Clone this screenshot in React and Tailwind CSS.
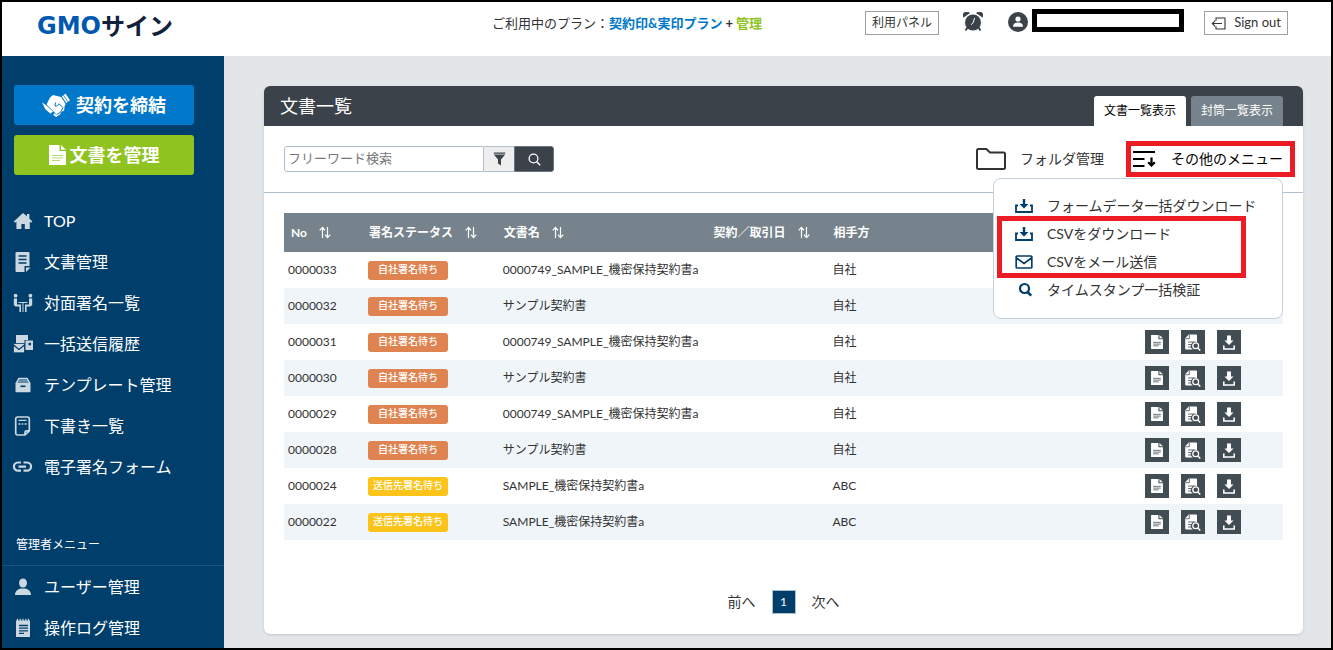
// Document list page — sidebar, toolbar with open "other" menu, documents table
import React, { useState } from 'react';

const DOCUMENTS = [
  { no: '0000033', status: 'own', name: '0000749_SAMPLE_機密保持契約書a', partner: '自社' },
  { no: '0000032', status: 'own', name: 'サンプル契約書', partner: '自社' },
  { no: '0000031', status: 'own', name: '0000749_SAMPLE_機密保持契約書a', partner: '自社' },
  { no: '0000030', status: 'own', name: 'サンプル契約書', partner: '自社' },
  { no: '0000029', status: 'own', name: '0000749_SAMPLE_機密保持契約書a', partner: '自社' },
  { no: '0000028', status: 'own', name: 'サンプル契約書', partner: '自社' },
  { no: '0000024', status: 'sent', name: 'SAMPLE_機密保持契約書a', partner: 'ABC' },
  { no: '0000022', status: 'sent', name: 'SAMPLE_機密保持契約書a', partner: 'ABC' },
];

const STATUS = {
  own: { label: '自社署名待ち', color: 'bg-[#df8350]' },
  sent: { label: '送信先署名待ち', color: 'bg-[#fcc419]' },
};

/* ---------- icons ---------- */

function Icon({ w = 20, h = 20, children, ...rest }) {
  return (
    <svg width={w} height={h} viewBox={`0 0 ${w} ${h}`} fill="currentColor" aria-hidden="true" className="shrink-0" {...rest}>
      {children}
    </svg>
  );
}

const HomeIcon = () => (
  <Icon>
    <path d="M10 2 0.8 10.4l1.2 1.4 1.4-1.1V18h5v-5h3.4v5h5v-7.3l1.4 1.1 1.2-1.4-3-2.8V3h-2.4v2.2z" />
  </Icon>
);

const DocIcon = () => (
  <Icon>
    <path d="M3.500 0h12a1 1 0 0 1 1 1v13h-5v6h-8a1 1 0 0 1-1-1V1a1 1 0 0 1 1-1zM13 15.500h4.500L13 20z" />
    <path d="M5.500 4h8M5.500 7.500h8M5.500 11h8" stroke="#003e6b" strokeWidth="1.300" />
  </Icon>
);

const MeetingIcon = () => (
  <Icon>
    <circle cx="2.600" cy="2.700" r="1.900" />
    <circle cx="17.400" cy="2.700" r="1.900" />
    <path d="M.8 5.500h3.200v6h4V19H6.400v-5.600H2.500L.8 12zM19.200 5.500H16v6h-4V19h1.600v-5.600h3.900l1.700-1.400zM5.500 9h9v1h-9z" />
    <path d="M9.500 9.500h1V19h-1z" />
  </Icon>
);

const MailHistoryIcon = () => (
  <Icon>
    <path d="M3 1h12v5h-3.500v3L6 12 3 9zM12.500 6.500H20v9.500h-7.500z" />
    <path d="M15.500 8.800h2.500v2.500h-2.500z" fill="#003e6b" />
    <path d="M.5 9.500h11V18a.8.800 0 0 1-.8.800H1.300a.8.800 0 0 1-.8-.8z" stroke="#003e6b" strokeWidth=".8" />
    <path d="M.5 11 6 15.500l5.500-4.500" fill="none" stroke="#003e6b" strokeWidth="1.300" />
  </Icon>
);

const BoxIcon = () => (
  <Icon>
    <path d="M6 3.500h8l3.500 5h-15z" opacity=".5" />
    <path d="M5.500 2.800h9L17.500 8v8.500a.8.800 0 0 1-.8.800H3.300a.8.800 0 0 1-.8-.8V8z" />
    <path d="M6.300 4.100h7.400L15.800 8H4.200z" fill="#003e6b" opacity=".5" />
    <path d="M7.500 10.500h5v1.600h-5z" fill="#003e6b" />
  </Icon>
);

const DraftIcon = () => (
  <Icon>
    <path d="M4.500 1h10a1.800 1.800 0 0 1 1.800 1.800v12L12 19H4.500a1.800 1.800 0 0 1-1.800-1.800V2.800A1.800 1.800 0 0 1 4.500 1zM16 14.800h-2.500a1.500 1.500 0 0 0-1.500 1.500V19" fill="none" stroke="currentColor" strokeWidth="1.700" />
    <path d="M5.500 4.300h8M5.500 8h2M8.700 8h1.600M11.600 8h2" stroke="currentColor" strokeWidth="1.300" />
  </Icon>
);

const LinkIcon = () => (
  <Icon>
    <path d="M8 5.500H5a4 4 0 0 0 0 8.200H8M10.500 5.500H14a4 4 0 0 1 0 8.200h-3.500M5.500 9.600H13" fill="none" stroke="currentColor" strokeWidth="2.200" />
  </Icon>
);

const UserIcon = () => (
  <Icon>
    <ellipse cx="10" cy="6" rx="4" ry="4.600" />
    <path d="M2 18c0-4 2.500-5.800 6-6.600h4c3.500.8 6 2.600 6 6.600z" />
  </Icon>
);

const LogIcon = () => (
  <Icon>
    <path d="M3 2.500h14V19H3z" />
    <path d="M4.500.8v3M7.200.8v3M10 .8v3M12.800.8v3M15.500.8v3" stroke="currentColor" strokeWidth="1.200" />
    <path d="M6 7.500h9M6 10.200h9M6 12.900h9M6 15.400h5" stroke="#003e6b" strokeWidth="1.300" />
  </Icon>
);

const HandshakeIcon = () => (
  <Icon w={28} h={25}>
    <path d="m19.800 3.300 3.800-2.500L28 7.300l-3.700 2.600z" />
    <path d="m21.400 2.300 4.400 6.500" stroke="#0077c8" strokeWidth=".8" />
    <path d="m0 9.300 5.500 4.200 5.500 5-2.500 2.300-5.300-4.800z" />
    <path d="M4.500 11.500 8 4.500l3-2.500 8 2 4.700 7-1.200 2.500-.3 4-3 1.500-1 2.200-4 2.800-3-2 1.500-2.500z" />
    <path d="M13.500 9.500 13 13c2 .5 3.500-.7 4-2.300l4 4-2.500 4.500-3.800 2.300" fill="none" stroke="#0077c8" strokeWidth="1" />
    <path d="m12 19.500 2 2" stroke="#0077c8" strokeWidth=".9" />
  </Icon>
);

const FileIcon = ({ w = 17, h = 20, line = '#b9dc74' }) => (
  <svg width={w} height={h} viewBox="0 0 17 20" fill="currentColor" aria-hidden="true">
    <path d="M0 0h10.500v6H17v14H0zM12 0l5 4.700h-5z" />
    <path d="M3 10.500h11M3 13h11M3 15.500h8" stroke={line} strokeWidth="1.100" />
  </svg>
);

const SearchDocIcon = () => (
  <Icon w={16} h={17}>
    <path d="M3.800.5h7.400a.8.800 0 0 1 .8.800v7A4 4 0 0 0 8 15.500H1a.8.800 0 0 1-.8-.8V4.300z" />
    <path d="M.5 4.700h3.800V.8M3 8h6M3 10.500h4M3 13h3.500" fill="none" stroke="#424c53" strokeWidth=".8" />
    <circle cx="10.700" cy="11.800" r="2.900" fill="#424c53" stroke="currentColor" strokeWidth="1.300" />
    <path d="m12.800 14 2.500 2.500" stroke="currentColor" strokeWidth="1.500" />
  </Icon>
);

const DownloadIcon = () => (
  <Icon w={12} h={15}>
    <path d="M4 .5h4V5.500h2.500L6 10 1.500 5.500H4z" />
    <path d="M.8 10.500v3.500h10.400v-3.500" fill="none" stroke="currentColor" strokeWidth="1.600" />
  </Icon>
);

const TrayIcon = () => (
  <Icon w={18} h={16}>
    <path d="M7.800 1h2.400v5h3.300L9 10.500 4.500 6h3.300z" />
    <path d="M3 7.500H1V14h16V7.500h-2" fill="none" stroke="currentColor" strokeWidth="1.800" />
  </Icon>
);

const MailIcon = () => (
  <Icon w={18} h={16}>
    <path d="M2 2h14a.8.800 0 0 1 .8.800v10.400a.8.800 0 0 1-.8.800H2a.8.800 0 0 1-.8-.8V2.800A.8.800 0 0 1 2 2zM1.500 4 9 9.500 16.500 4" fill="none" stroke="currentColor" strokeWidth="1.700" />
  </Icon>
);

const VerifyIcon = () => (
  <Icon w={18} h={16}>
    <circle cx="9.500" cy="6.500" r="4.500" fill="none" stroke="currentColor" strokeWidth="2.200" />
    <path d="m12.500 10 3.700 3.700" stroke="currentColor" strokeWidth="2.600" />
  </Icon>
);

const SortIcon = () => (
  <Icon w={12} h={13}>
    <path d="M3.500 12V1.500M.7 4.300l2.800-3 2.500 3M8.500 1v10.500M6 8.700l2.500 3 2.800-3" fill="none" stroke="currentColor" strokeWidth="1.200" />
  </Icon>
);

const ClockIcon = () => (
  <Icon>
    <circle cx="10" cy="10.500" r="8" />
    <path d="M.5 5.500A3.600 3.600 0 0 1 6.800 1.200zM19.500 5.500a3.600 3.600 0 0 0-6.300-4.300z" />
    <path d="m4.500 15.500-2 3M15.500 15.500l2 3" stroke="currentColor" strokeWidth="2" />
    <path d="M11.500 6 10.200 10.700 8 12.700" fill="none" stroke="#fff" strokeWidth="1" />
  </Icon>
);

const AccountIcon = () => (
  <Icon>
    <circle cx="10" cy="10" r="10" />
    <circle cx="10" cy="7" r="2.600" fill="#fff" />
    <path d="M5 14.800c0-3 2-4.200 5-4.200s5 1.200 5 4.200z" fill="#fff" />
  </Icon>
);

const SignOutIcon = () => (
  <Icon w={15} h={13}>
    <path d="M5 3.800V1h9v11H5V9.200M11 6.500H1.500M4.200 3.700 1.300 6.500l2.900 2.800" fill="none" stroke="currentColor" strokeWidth="1.100" />
  </Icon>
);

const FolderIcon = () => (
  <Icon w={30} h={22}>
    <path d="M2.500 1h7.800l3.700 3.500h13.500a1.500 1.500 0 0 1 1.500 1.500v13.500a1.500 1.500 0 0 1-1.500 1.500h-25A1.500 1.500 0 0 1 1 19.500v-17A1.500 1.500 0 0 1 2.500 1z" fill="none" stroke="currentColor" strokeWidth="2" />
  </Icon>
);

const ListDownIcon = () => (
  <Icon w={24} h={16}>
    <path d="M0 1h22M0 8h11.500M0 15h11.500" stroke="currentColor" strokeWidth="2" />
    <path d="M18.500 6.500v8M15.200 11.200l3.300 3.300 3.300-3.300" fill="none" stroke="currentColor" strokeWidth="2.200" />
  </Icon>
);

const FilterIcon = () => (
  <Icon w={13} h={14}>
    <path d="M.8.500h11.400v1.200H.8zM.8 2.500h11.400L8 7.500V13.500L5 11.500v-4z" />
  </Icon>
);

const LensIcon = () => (
  <Icon w={13} h={13}>
    <circle cx="5.500" cy="5.500" r="4.400" fill="none" stroke="currentColor" strokeWidth="1.300" />
    <path d="m8.700 8.700 3.500 3.500" stroke="currentColor" strokeWidth="1.400" />
  </Icon>
);

/* ---------- page parts ---------- */

const NAV = [
  { label: 'TOP', icon: HomeIcon },
  { label: '文書管理', icon: DocIcon },
  { label: '対面署名一覧', icon: MeetingIcon },
  { label: '一括送信履歴', icon: MailHistoryIcon },
  { label: 'テンプレート管理', icon: BoxIcon },
  { label: '下書き一覧', icon: DraftIcon },
  { label: '電子署名フォーム', icon: LinkIcon },
];

const ADMIN_NAV = [
  { label: 'ユーザー管理', icon: UserIcon },
  { label: '操作ログ管理', icon: LogIcon },
];

function NavList({ items }) {
  return (
    <ul>
      {items.map(({ label, icon: NavIcon }) => (
        <li key={label}>
          <a href="#" className="flex h-[41px] items-center gap-[11px] pl-[11px] text-base text-white">
            <span className="text-[#ccd8e1]"><NavIcon /></span>
            {label}
          </a>
        </li>
      ))}
    </ul>
  );
}

function Header() {
  return (
    <header className="flex h-[54px] items-start justify-between bg-white pr-[43px] pl-[35px]">
      <a href="#" className="flex h-12 items-center text-2xl font-bold">
        <span className="font-['DejaVu_Sans'] text-[#0058b0]">GMO</span>
        <span className="text-[#14213a]">サイン</span>
      </a>

      <div className="flex items-start">
        <p className="mr-[103px] flex h-11 items-center text-[13px] text-[#333]">
          ご利用中のプラン：
          <b className="text-[#0077c8]">契約印&amp;実印プラン</b>
          <b className="px-[3px]">+</b>
          <b className="text-[#8fc31f]">管理</b>
        </p>
        <button type="button" className="mt-[9px] h-6 border border-[#9aa0a4] px-1.5 text-xs text-[#333]">
          利用パネル
        </button>
        <button type="button" aria-label="通知" className="mt-2.5 ml-6 text-[#3b4249]">
          <ClockIcon />
        </button>
        <span className="mt-2.5 mr-1 ml-[25px] text-[#3b4249]"><AccountIcon /></span>
        <div className="mt-[7px] h-[23px] w-[152px] border-[5px] border-black" />
        <button type="button" className="mt-[9px] ml-5 flex h-6 w-[84px] items-center justify-between border border-[#9aa0a4] px-1.5 text-[13px] text-[#333]">
          <SignOutIcon />
          Sign out
        </button>
      </div>
    </header>
  );
}

function Sidebar() {
  return (
    <nav className="w-[222px] shrink-0 bg-[#003e6b]">
      <div className="flex flex-col gap-2.5 pt-[29px] pr-[30px] pb-[25px] pl-3">
        <button type="button" className="flex h-10 items-center justify-center gap-1.5 rounded-[3px] bg-[#0077c8] text-lg font-bold text-white">
          <HandshakeIcon />
          契約を締結
        </button>
        <button type="button" className="flex h-10 items-center justify-center gap-1 rounded-[3px] bg-[#8fc31f] text-lg font-bold text-white">
          <FileIcon />
          文書を管理
        </button>
      </div>
      <NavList items={NAV} />
      <h2 className="mt-12 border-b border-[#1f5279] pb-2.5 pl-3.5 text-xs leading-5 text-white">
        管理者メニュー
      </h2>
      <NavList items={ADMIN_NAV} />
    </nav>
  );
}

function MenuItem({ icon: ItemIcon, children }) {
  return (
    <a href="#" className="flex h-7 items-center gap-3.5 text-sm whitespace-nowrap text-[#333]">
      <span className="text-[#003e6b]"><ItemIcon /></span>
      {children}
    </a>
  );
}

function OtherMenu() {
  return (
    <div className="absolute top-8 right-0 z-10 h-[141px] w-[290px] rounded-lg border border-[#c5d0da] bg-white pt-[13px] pl-[21px]">
      <MenuItem icon={TrayIcon}>フォームデータ一括ダウンロード</MenuItem>
      <div className="relative">
        <MenuItem icon={TrayIcon}>CSVをダウンロード</MenuItem>
        <MenuItem icon={MailIcon}>CSVをメール送信</MenuItem>
        <span className="pointer-events-none absolute -top-1 right-9 -bottom-0.5 -left-[18px] border-[5px] border-[#ed1c24]" />
      </div>
      <MenuItem icon={VerifyIcon}>タイムスタンプ一括検証</MenuItem>
    </div>
  );
}

function Toolbar() {
  const [query, setQuery] = useState('');
  const [menuOpen, setMenuOpen] = useState(true);

  return (
    <div className="flex items-start justify-between border-b border-[#afbfcd] px-5 py-5">
      <form className="flex h-[26px]" onSubmit={(e) => e.preventDefault()}>
        <input
          type="text"
          aria-label="フリーワード検索"
          placeholder="フリーワード検索"
          value={query}
          onChange={(e) => setQuery(e.target.value)}
          className="w-[200px] rounded-l-[3px] border border-[#afbfcd] px-[3px] text-[13px] placeholder:text-[#777] focus:outline-none"
        />
        <button type="button" aria-label="絞り込み" className="flex w-[30px] items-center justify-center border-y border-[#afbfcd] bg-[#eee] text-[#3b4249]">
          <FilterIcon />
        </button>
        <button type="submit" aria-label="検索" className="flex w-10 items-center justify-center rounded-r-[3px] border border-[#69747d] bg-[#3b4249] text-white">
          <LensIcon />
        </button>
      </form>

      <div className="relative flex h-[26px] items-center gap-[29px] text-sm text-[#333]">
        <button type="button" className="flex items-center gap-3.5">
          <FolderIcon />
          フォルダ管理
        </button>
        <div className="relative">
          <button type="button" onClick={() => setMenuOpen((o) => !o)} className="flex items-center gap-3.5 text-black">
            <ListDownIcon />
            その他のメニュー
          </button>
          <span className="pointer-events-none absolute -inset-y-2 -right-3 -left-[7px] z-20 border-[5px] border-[#ed1c24]" />
        </div>
        {menuOpen && <OtherMenu />}
      </div>
    </div>
  );
}

function HeadCell({ label, sortable = false, className }) {
  return (
    <th scope="col" className={className}>
      <span className="flex items-center gap-3">
        {label}
        {sortable && <SortIcon />}
      </span>
    </th>
  );
}

function DocumentTable() {
  const action = 'flex size-6 items-center justify-center bg-[#424c53] text-white';

  return (
    <table className="w-full table-fixed text-left text-xs text-[#333]">
      <thead>
        <tr className="h-[39px] bg-[#76838c] text-white">
          <HeadCell label="No" sortable className="w-[8%] pl-[7px]" />
          <HeadCell label="署名ステータス" sortable className="w-[13.5%] pl-[5px]" />
          <HeadCell label="文書名" sortable className="w-[21%] pl-[5px]" />
          <HeadCell label="契約／取引日" sortable className="w-[12%] pl-[5px]" />
          <HeadCell label="相手方" className="pl-[5px]" />
          <th className="w-[14.2%]" aria-label="操作" />
        </tr>
      </thead>
      <tbody>
        {DOCUMENTS.map((doc) => (
          <tr key={doc.no} className="h-9 even:bg-[#f0f5f9]">
            <td className="px-1">{doc.no}</td>
            <td className="px-1">
              <span className={`flex h-[19px] w-20 items-center justify-center rounded-[3px] text-[10px] font-medium text-white ${STATUS[doc.status].color}`}>
                {STATUS[doc.status].label}
              </span>
            </td>
            <td className="px-1">{doc.name}</td>
            <td className="px-1" />
            <td className="px-1">{doc.partner}</td>
            <td className="px-1">
              <div className="flex gap-3">
                <button type="button" aria-label="文書を表示" className={action}>
                  <FileIcon w={12} h={14} line="#424c53" />
                </button>
                <button type="button" aria-label="詳細" className={action}>
                  <SearchDocIcon />
                </button>
                <button type="button" aria-label="ダウンロード" className={action}>
                  <DownloadIcon />
                </button>
              </div>
            </td>
          </tr>
        ))}
      </tbody>
    </table>
  );
}

export default function App() {
  return (
    <div className="flex min-h-screen flex-col border-2 border-black bg-[#e2e6e9] font-[Lato,'Noto_Sans_CJK_JP',sans-serif] font-normal">
      <Header />
      <div className="flex grow">
        <Sidebar />
        <main className="min-w-0 grow pt-[30px] pr-7 pb-3.5 pl-10">
          <section className="rounded-md bg-white shadow-sm">
            <div className="flex h-10 items-end justify-between rounded-t-md bg-[#3b4249] px-5 text-white">
              <h1 className="-ml-1 self-center text-lg">文書一覧</h1>
              <div role="tablist" className="flex gap-[5px] text-xs">
                <button type="button" role="tab" aria-selected="true" className="h-[30px] rounded-t-[3px] bg-white px-2.5 text-black">
                  文書一覧表示
                </button>
                <button type="button" role="tab" aria-selected="false" className="h-[30px] rounded-t-[3px] bg-[#76838c] px-2.5 text-white">
                  封筒一覧表示
                </button>
              </div>
            </div>
            <Toolbar />
            <div className="px-5 py-5">
              <DocumentTable />
              <div className="mt-[50px] flex items-center justify-center gap-4 text-sm text-[#333]">
                <a href="#">前へ</a>
                <span aria-current="page" className="flex size-6 items-center justify-center border border-[#afbfcd] bg-[#003e6b] text-xs text-white">1</span>
                <a href="#">次へ</a>
              </div>
            </div>
          </section>
        </main>
      </div>
    </div>
  );
}
